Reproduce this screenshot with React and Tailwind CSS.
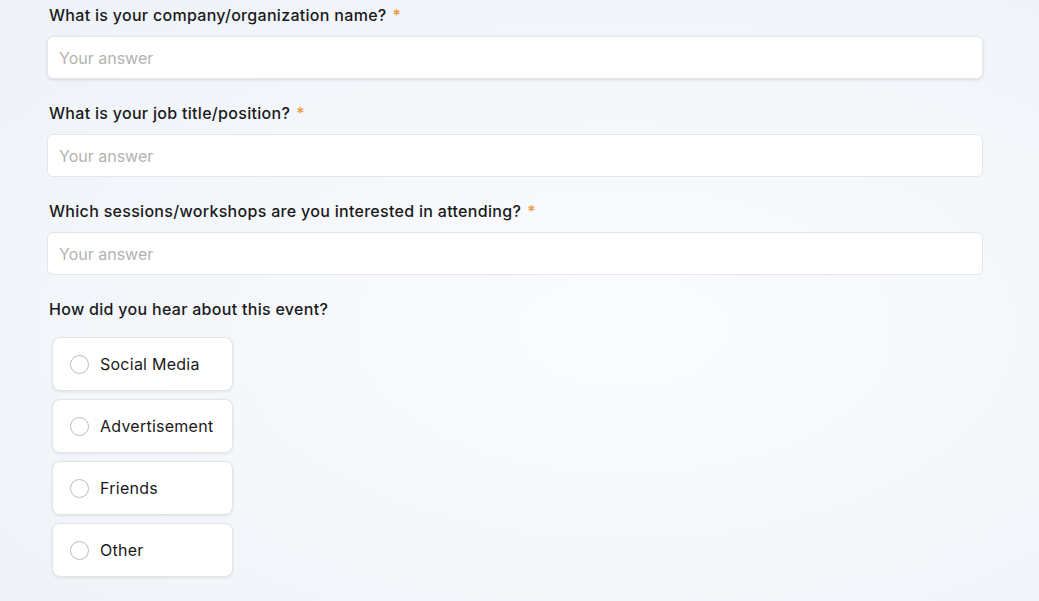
import React from 'react';

const font = { fontFamily: 'Inter, "Noto Sans", sans-serif' };

function Label({ children, required }) {
  return (
    <div className="px-[2px] text-[16px] leading-6 font-medium tracking-[0.3px] text-[#1a1a1a]">
      {children}
      {required && <span className="ml-[6px] text-[#e59a3c]">*</span>}
    </div>
  );
}

function TextField({ label, required, shadow }) {
  return (
    <div className="flex flex-col gap-[9px]">
      <Label required={required}>{label}</Label>
      <input
        placeholder="Your answer"
        className={`h-[43px] w-full rounded-md border border-[#e3e6ea] bg-white px-[11px] text-[16px] text-gray-800 outline-none placeholder:text-[#b3b3b3] ${shadow ? 'shadow-[0_1px_3px_rgba(0,0,0,0.12)]' : ''}`}
      />
    </div>
  );
}

function Option({ label }) {
  return (
    <label className="flex h-[54px] w-[181px] items-center gap-[11px] rounded-lg border border-[#e4e4e4] bg-white pl-[17px] shadow-[0_1px_3px_rgba(0,0,0,0.08)]">
      <span className="h-[19px] w-[19px] rounded-full border border-[#bdbdbd] bg-white" />
      <span className="text-[16px] tracking-[0.25px] text-[#1a1a1a]">{label}</span>
    </label>
  );
}

export default function App() {
  return (
    <div
      style={font}
      className="min-h-[601px] w-full bg-[radial-gradient(ellipse_at_60%_55%,#fbfcfe_0%,#f3f6fa_60%,#eef3f9_100%)] pl-[47px] pr-[56px] pt-[3px]"
    >
      <div className="flex w-[936px] flex-col gap-[22px]">
        <TextField label="What is your company/organization name?" required shadow />
        <TextField label="What is your job title/position?" required />
        <TextField label="Which sessions/workshops are you interested in attending?" required />
        <div className="flex flex-col gap-4">
          <Label>How did you hear about this event?</Label>
          <div className="flex flex-col gap-2 pl-[5px]">
            <Option label="Social Media" />
            <Option label="Advertisement" />
            <Option label="Friends" />
            <Option label="Other" />
          </div>
        </div>
      </div>
    </div>
  );
}
